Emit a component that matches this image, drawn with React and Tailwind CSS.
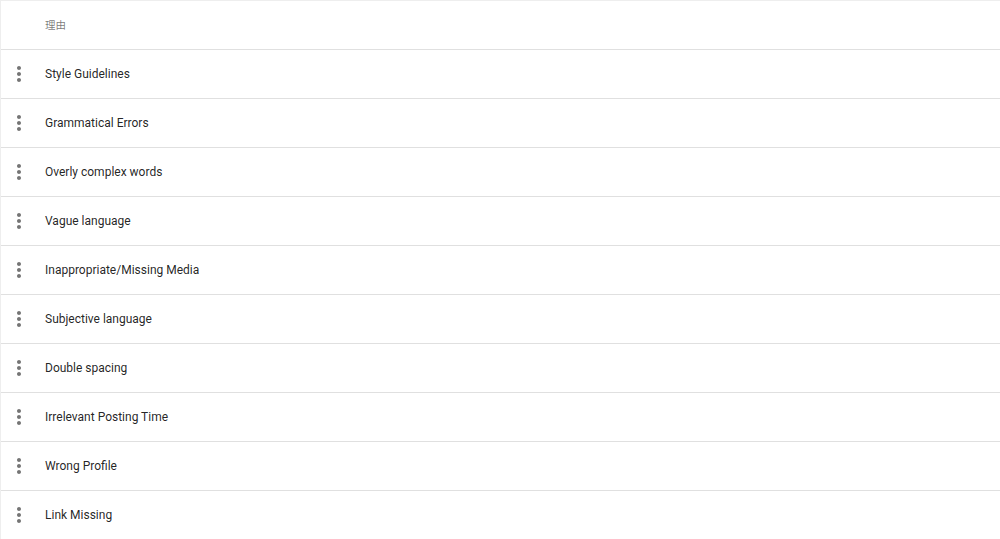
import React from "react";

const rows = [
  "Style Guidelines",
  "Grammatical Errors",
  "Overly complex words",
  "Vague language",
  "Inappropriate/Missing Media",
  "Subjective language",
  "Double spacing",
  "Irrelevant Posting Time",
  "Wrong Profile",
  "Link Missing",
];

function MoreVert() {
  return (
    <svg width="24" height="24" viewBox="0 0 24 24" className="fill-[#757575]">
      <path d="M12 8c1.1 0 2-.9 2-2s-.9-2-2-2-2 .9-2 2 .9 2 2 2zm0 2c-1.1 0-2 .9-2 2s.9 2 2 2 2-.9 2-2-.9-2-2-2zm0 6c-1.1 0-2 .9-2 2s.9 2 2 2 2-.9 2-2-.9-2-2-2z" />
    </svg>
  );
}

export default function App() {
  return (
    <div className="min-h-[539px] bg-white font-['Roboto',sans-serif]">
      <div className="border-l border-t border-[#eeeeee] bg-white shadow-[0_1px_3px_0_rgba(0,0,0,0.2),0_1px_1px_0_rgba(0,0,0,0.14),0_2px_1px_-1px_rgba(0,0,0,0.12)]">
        <div className="flex h-[49px] items-center border-b border-[#e0e0e0] pl-[44px] pt-[2px] text-[10.5px] text-[rgba(0,0,0,0.54)] font-['Roboto','Noto_Sans_CJK_SC',sans-serif]">
          理由
        </div>
        {rows.map((r) => (
          <div
            key={r}
            className="flex h-[49px] items-center border-b border-[#e0e0e0] text-[12px] text-[rgba(0,0,0,0.87)]"
          >
            <div className="flex w-[44px] items-center pl-[6px]">
              <MoreVert />
            </div>
            <span>{r}</span>
          </div>
        ))}
      </div>
    </div>
  );
}
